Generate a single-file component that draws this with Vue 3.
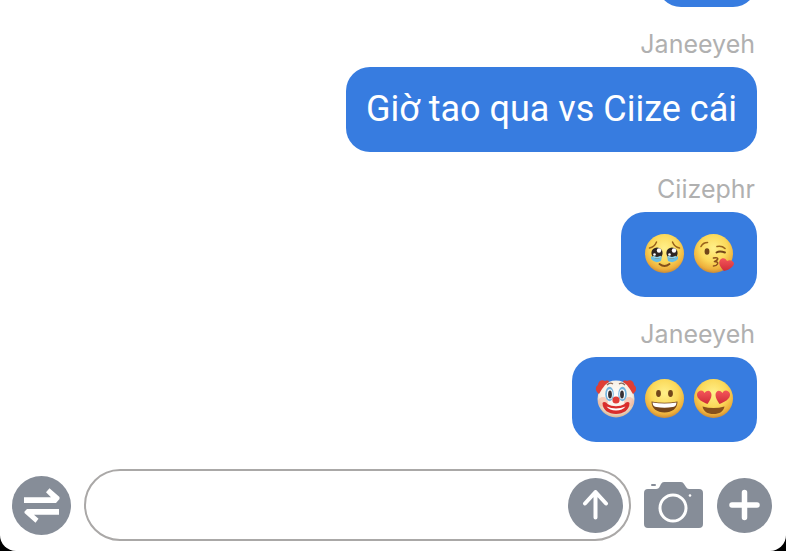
<template>
  <div class="chat-page">
    <!-- shared gradients for the emoji -->
    <svg class="defs" width="0" height="0" aria-hidden="true">
      <defs>
        <radialGradient id="face" cx="50%" cy="36%" r="64%">
          <stop offset="0" stop-color="#fff08a" />
          <stop offset="0.55" stop-color="#fbd95a" />
          <stop offset="0.85" stop-color="#eeb03c" />
          <stop offset="1" stop-color="#c98a38" />
        </radialGradient>
        <radialGradient id="clown" cx="50%" cy="40%" r="62%">
          <stop offset="0" stop-color="#ffffff" />
          <stop offset="0.7" stop-color="#f7eee2" />
          <stop offset="1" stop-color="#d2ab85" />
        </radialGradient>
        <linearGradient id="heart" x1="0" y1="0" x2="0" y2="1">
          <stop offset="0" stop-color="#f4565a" />
          <stop offset="1" stop-color="#d02c38" />
        </linearGradient>
      </defs>
    </svg>

    <main class="messages">
      <div class="message">
        <div class="bubble bubble-short"></div>
      </div>

      <div class="message" v-for="msg in messages" :key="msg.id">
        <div class="sender">{{ msg.sender }}</div>
        <div class="bubble" v-if="msg.text">{{ msg.text }}</div>
        <div class="bubble bubble-emoji" v-else>
          <svg
            v-for="name in msg.emojis"
            :key="name"
            class="emoji"
            viewBox="0 0 41 41"
            role="img"
            :aria-label="name"
          >
            <g v-if="name === 'clown'">
              <circle cx="21" cy="21" r="18.5" fill="url(#clown)" />
              <path d="M4 16c-4-3-4-7-1-9 0-4 4-6 7-4 3-1 4 0 4 1-4 2-7 7-10 12z" fill="#df3e35" />
              <path d="M38 16c4-3 4-7 1-9 0-4-4-6-7-4-3-1-4 0-4 1 4 2 7 7 10 12z" fill="#df3e35" />
              <ellipse cx="8" cy="24" rx="5" ry="5" fill="#f2a083" opacity="0.45" />
              <ellipse cx="34" cy="24" rx="5" ry="5" fill="#f2a083" opacity="0.45" />
              <path d="M12 7q3-3 6-1M24 6q3-2 6 1" fill="none" stroke="#8a6b5c" stroke-width="1.3" />
              <ellipse cx="14.5" cy="16" rx="4.3" ry="7.2" fill="#72b4df" />
              <ellipse cx="27.5" cy="16" rx="4.3" ry="7.2" fill="#72b4df" />
              <ellipse cx="14.8" cy="16.2" rx="2.9" ry="5" fill="#ffffff" />
              <ellipse cx="27.2" cy="16.2" rx="2.9" ry="5" fill="#ffffff" />
              <ellipse cx="15" cy="16.5" rx="1.9" ry="4" fill="#373135" />
              <ellipse cx="27" cy="16.5" rx="1.9" ry="4" fill="#373135" />
              <path d="M7.5 25c1-2 4-1 5 1 5 3 12 3 17 0 1-2 4-3 5-1 0 7-6 11-13.5 11S7.500 32 7.500 25z" fill="#d92d2b" />
              <path d="M11.500 28.500q9.500 4 19 0-3 4-9.500 4t-9.500-4z" fill="#ffffff" />
              <circle cx="21" cy="22" r="3.6" fill="#e23d37" />
            </g>
            <g v-else>
              <circle cx="20.5" cy="20.5" r="19.5" fill="url(#face)" />
              <g v-if="name === 'pleading'">
                <path d="M5.500 15q5-1 7-6M35.500 15q-5-1-7-6" fill="none" stroke="#9a641b" stroke-width="1.5" stroke-linecap="round" />
                <path d="M7 23q7 5 11 0l-1 5q-6 3-10-2zM34 23q-7 5-11 0l1 5q6 3 10-2z" fill="#66bde3" />
                <circle cx="13" cy="20" r="5.6" fill="#2d2522" />
                <circle cx="28" cy="20" r="5.6" fill="#2d2522" />
                <circle cx="15" cy="17.5" r="2.2" fill="#ffffff" />
                <circle cx="30" cy="17.5" r="2.2" fill="#ffffff" />
                <circle cx="10.5" cy="21.5" r="1.3" fill="#ffffff" />
                <circle cx="25.5" cy="21.5" r="1.3" fill="#ffffff" />
                <path d="M9 23.500q4 2.500 8 0M24 23.500q4 2.500 8 0" fill="none" stroke="#90d3ec" stroke-width="1.6" />
                <path d="M15.500 31q5 4 10 0" fill="none" stroke="#83501a" stroke-width="1.9" stroke-linecap="round" />
              </g>
              <g v-else-if="name === 'kiss'">
                <path d="M8 13.500q2-4 6.500-4M24 13.500q5-1 8 2" fill="none" stroke="#9a641b" stroke-width="1.6" stroke-linecap="round" />
                <ellipse cx="14" cy="18.5" rx="2.4" ry="3.3" fill="#72461a" />
                <path d="M23.500 19.500q3-2 8.500 0" fill="none" stroke="#72461a" stroke-width="1.9" stroke-linecap="round" />
                <path d="M20.500 25q5-1 4 1.500-1 1.500-3 2 4 0 3 2.500-1 2-4 2" fill="none" stroke="#8c501c" stroke-width="1.6" stroke-linecap="round" stroke-linejoin="round" />
                <path d="M31 38c-4-4-6-8-4-11 2-3 6-2 7 1 3-2 7 0 7 3-1 3-5 6-10 7z" fill="url(#heart)" />
              </g>
              <g v-else-if="name === 'grin'">
                <ellipse cx="14.5" cy="15.5" rx="2.4" ry="3.4" fill="#72461a" />
                <ellipse cx="26.5" cy="15.5" rx="2.4" ry="3.4" fill="#72461a" />
                <path d="M7.500 23.500q13 2.500 26 0c0 7-5.500 11-13 11s-13-4-13-11z" fill="#74451b" />
                <path d="M8.500 24.500q12 2 24 0c0 3-2 4.500-4 4.500-5 1-11 1-16 0-2 0-4-1.500-4-4.500z" fill="#ffffff" />
              </g>
              <g v-else>
                <path d="M9.500 28.500q11 3 22 0c-1 5-5 7.500-11 7.500s-10-2.500-11-7.500z" fill="#87511c" />
                <path d="M14.500 26c-5-2-11-5-10.500-10 1-4 6-5 7.500-1 3-4 7-2 7 2 0 3-2 6-4 9z" fill="url(#heart)" />
                <path d="M26.500 26c5-2 11-5 10.500-10-1-4-6-5-7.500-1-3-4-7-2-7 2 0 3 2 6 4 9z" fill="url(#heart)" />
              </g>
            </g>
          </svg>
        </div>
      </div>
    </main>

    <form class="composer" @submit.prevent="handleSend">
      <button type="button" class="icon-btn switch-btn" aria-label="Switch">
        <svg viewBox="0 0 59 59">
          <circle cx="29.5" cy="29.5" r="29.5" fill="#868d98" />
          <path d="M12 21.300H39L34 16.300 37.500 12.300 47.500 21V23L44 27H12z" fill="#ffffff" />
          <path d="M47 33V38.700H22L26.500 42.700 23.500 46.700 12.500 37V35.500L15 33z" fill="#ffffff" />
        </svg>
      </button>

      <div class="input-box">
        <input v-model="draft" type="text" class="text-input" aria-label="Message" />
        <button type="submit" class="icon-btn round-btn" aria-label="Send">
          <svg viewBox="0 0 55 55">
            <circle cx="27.5" cy="27.5" r="27.5" fill="#868d98" />
            <path d="M27.500 39.500V14M17 25.500L27.500 14 38 25.500" fill="none" stroke="#ffffff" stroke-width="4" stroke-linecap="round" stroke-linejoin="round" />
          </svg>
        </button>
      </div>

      <button type="button" class="icon-btn camera-btn" aria-label="Camera">
        <svg viewBox="0 0 60 46">
          <path d="M4 7h8q3 0 4-3l1-2q1-2 3-2h17q2 0 3 2l2 3q1 2 3 2h10q4 0 4 4v31q0 4-4 4H4q-4 0-4-4V11q0-4 4-4z" fill="#868d98" />
          <rect x="7" y="2" width="5" height="2" rx="1" fill="#868d98" />
          <circle cx="29" cy="26" r="13" fill="none" stroke="#ffffff" stroke-width="3" />
          <circle cx="46" cy="13.5" r="1.3" fill="#ffffff" />
        </svg>
      </button>

      <button type="button" class="icon-btn round-btn" aria-label="Add">
        <svg viewBox="0 0 55 55">
          <circle cx="27.5" cy="27.5" r="27.5" fill="#868d98" />
          <path d="M27.500 14.500v25M15 27h25" fill="none" stroke="#ffffff" stroke-width="5.5" stroke-linecap="round" />
        </svg>
      </button>
    </form>
  </div>
</template>

<script setup>
import { ref } from 'vue';

const draft = ref('');

const messages = ref([
  { id: 1, sender: 'Janeeyeh', text: 'Giờ tao qua vs Ciize cái' },
  { id: 2, sender: 'Ciizephr', emojis: ['pleading', 'kiss'] },
  { id: 3, sender: 'Janeeyeh', emojis: ['clown', 'grin', 'hearts'] },
]);

const handleSend = () => {
  const text = draft.value.trim();
  if (!text) return;
  messages.value.push({ id: messages.value.length + 1, sender: 'Janeeyeh', text });
  draft.value = '';
};
</script>

<style>
body {
  margin: 0;
  background-color: #000;
}
</style>

<style scoped>
.chat-page {
  display: flex;
  flex-direction: column;
  height: 100vh;
  overflow: hidden;
  background-color: #fff;
  border-radius: 0 0 16px 16px;
  font-family: Inter, "Liberation Sans", sans-serif;
}

.defs {
  position: absolute;
}

.messages {
  flex: 1;
  min-height: 0;
  display: flex;
  flex-direction: column;
  justify-content: flex-end;
  gap: 22px;
  padding: 0 29px 27px;
  overflow: hidden;
}

.message {
  display: flex;
  flex-direction: column;
  align-items: flex-end;
  flex-shrink: 0;
  gap: 8px;
}

.sender {
  padding-right: 2px;
  font-size: 25px;
  line-height: 30px;
  color: #b0b0b0;
}

.bubble {
  box-sizing: border-box;
  min-height: 85px;
  padding: 20px 20px 21px;
  border-radius: 24px;
  background-color: #377ce0;
  color: #fff;
  font-family: Roboto, "Liberation Sans", sans-serif;
  font-size: 36px;
  line-height: 44px;
}

.bubble-short {
  width: 100px;
}

.bubble-emoji {
  display: flex;
  gap: 8px;
  padding: 21px 23px;
}

.emoji {
  width: 41px;
  height: 41px;
}

.composer {
  display: flex;
  align-items: center;
  padding: 0 14px 10px 12px;
  gap: 13px;
}

.input-box {
  box-sizing: border-box;
  flex: 1;
  min-width: 0;
  height: 72px;
  display: flex;
  align-items: center;
  padding: 0 6px 0 24px;
  border: 2px solid #aaa8a7;
  border-radius: 36px;
}

.text-input {
  flex: 1;
  min-width: 0;
  height: 44px;
  padding: 0;
  border: none;
  outline: none;
  background: transparent;
  font-family: inherit;
  font-size: 36px;
}

.icon-btn {
  flex-shrink: 0;
  padding: 0;
  border: none;
  background: transparent;
  cursor: pointer;
}

.icon-btn svg {
  display: block;
  width: 100%;
}

.switch-btn {
  width: 59px;
}

.round-btn {
  width: 55px;
}

.camera-btn {
  width: 60px;
}
</style>
